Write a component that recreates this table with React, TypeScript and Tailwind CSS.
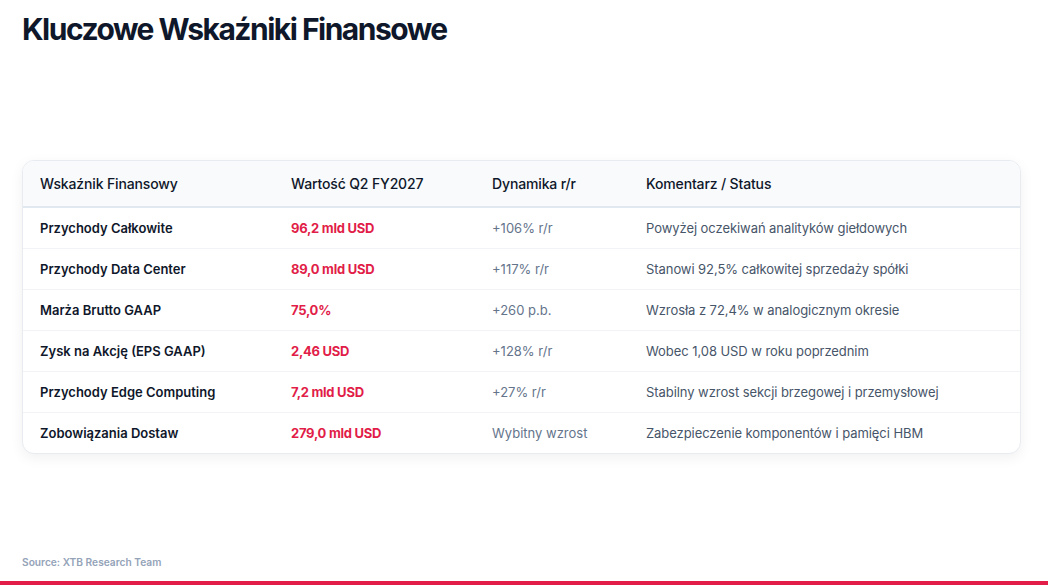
const rows = [
  ['Przychody Całkowite', '96,2 mld USD', '+106% r/r', 'Powyżej oczekiwań analityków giełdowych'],
  ['Przychody Data Center', '89,0 mld USD', '+117% r/r', 'Stanowi 92,5% całkowitej sprzedaży spółki'],
  ['Marża Brutto GAAP', '75,0%', '+260 p.b.', 'Wzrosła z 72,4% w analogicznym okresie'],
  ['Zysk na Akcję (EPS GAAP)', '2,46 USD', '+128% r/r', 'Wobec 1,08 USD w roku poprzednim'],
  ['Przychody Edge Computing', '7,2 mld USD', '+27% r/r', 'Stabilny wzrost sekcji brzegowej i przemysłowej'],
  ['Zobowiązania Dostaw', '279,0 mld USD', 'Wybitny wzrost', 'Zabezpieczenie komponentów i pamięci HBM'],
]

const App = () => {
  return (
    <div
      className="relative flex flex-col w-full h-[585px] bg-white pl-[22px] pr-[27px] overflow-hidden"
      style={{ fontFamily: 'Inter, "Noto Sans", sans-serif' }}
    >
      <h1 className="mt-[11px] text-[30px] leading-[36px] font-bold tracking-[-0.05em] text-[#0f172a]">
        Kluczowe Wskaźniki Finansowe
      </h1>

      {/* table card */}
      <div className="flex-1">
        <div className="w-full mt-[113px] rounded-xl border border-[#e8ecf1] bg-white shadow-[0_4px_14px_rgba(15,23,42,0.06)] overflow-hidden">
          <table className="w-full border-collapse text-left">
            <thead>
              <tr className="h-[46px] bg-[#f8fafc] border-b-2 border-[#e2e8f0] text-[14px] font-medium text-[#0f172a] tracking-[-0.01em]">
                <th className="w-[251px] pl-[17px] font-medium">Wskaźnik Finansowy</th>
                <th className="w-[201px] pl-[17px] font-medium">Wartość Q2 FY2027</th>
                <th className="w-[154px] pl-[17px] font-medium">Dynamika r/r</th>
                <th className="pl-[17px] font-medium">Komentarz / Status</th>
              </tr>
            </thead>
            <tbody className="text-[13px]">
              {rows.map((r, i) => (
                <tr key={r[0]} className={`h-[41px] ${i < rows.length - 1 ? 'border-b border-[#f1f3f6]' : ''}`}>
                  <td className="pl-[17px] pt-[2px] font-semibold text-[#0f172a]">{r[0]}</td>
                  <td className="pl-[17px] pt-[2px] font-bold text-[#e11d48] tracking-[-0.02em]">{r[1]}</td>
                  <td className="pl-[17px] pt-[2px] text-[#64748b]">{r[2]}</td>
                  <td className="pl-[17px] pt-[2px] text-[#475569] tracking-[-0.005em]">{r[3]}</td>
                </tr>
              ))}
            </tbody>
          </table>
        </div>
      </div>

      <p className="mb-[15px] text-[10.2px] font-semibold text-[#94a3b8]">Source: XTB Research Team</p>
      <div className="absolute bottom-0 left-0 right-0 h-[4px] bg-[#e11d48]" />
    </div>
  )
}

export default App
